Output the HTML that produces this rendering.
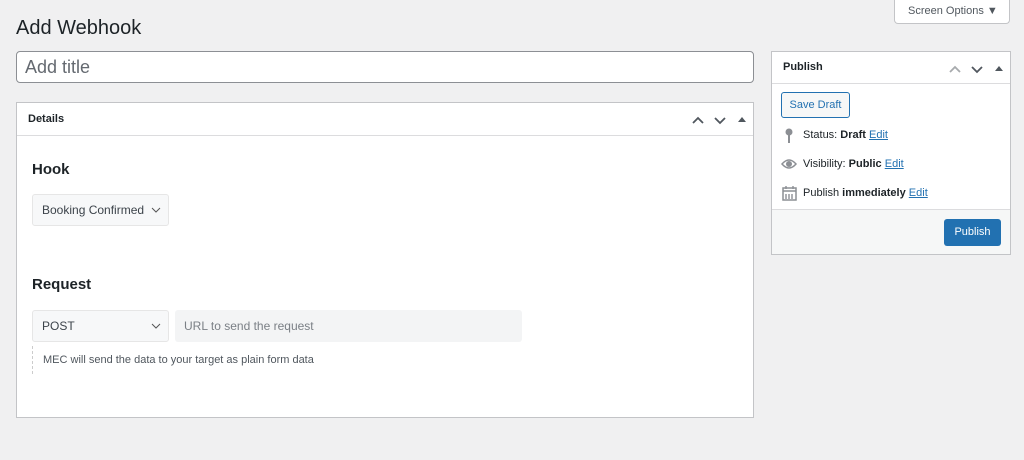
<!DOCTYPE html>
<html><head><style>
*{box-sizing:border-box}
body{margin:0;width:1024px;height:460px;background:#f0f0f1;font-family:"Liberation Sans",sans-serif;color:#1d2327;position:relative;overflow:hidden;font-size:11px}
.abs{position:absolute}
.box{background:#fff;border:1px solid #c3c4c7}
a{color:#2271b1;text-decoration:underline}
.chev{fill:none;stroke:#50575e;stroke-width:1.8}
</style></head><body>
<div class="abs" style="left:894px;top:0;width:116px;height:24px;background:#fff;border:1px solid #c3c4c7;border-top:none;border-radius:0 0 4px 4px;font-size:11px;color:#50575e;line-height:22px;padding-left:13px">Screen Options &#9660;</div>
<div class="abs" style="left:16px;top:16px;font-size:20px;line-height:24px">Add Webhook</div>
<div class="abs" style="left:16px;top:51px;width:738px;height:32px;background:#fff;border:1px solid #8c8f94;border-radius:4px;font-size:18px;color:#646970;line-height:30px;padding-left:8px">Add title</div>

<div class="abs box" style="left:16px;top:102px;width:738px;height:316px">
 <div style="height:33px;border-bottom:1px solid #dcdcde;font-weight:bold;font-size:11px;line-height:32px;padding-left:11px">Details</div>
 <svg class="abs" style="left:674px;top:10px" width="60" height="14"><path class="chev" d="M2 10l5-5 5 5M24 5l5 5 5-5"/><path d="M47 9l4-5 4 5z" fill="#50575e"/></svg>
 <div class="abs" style="left:15px;top:58px;font-size:15px;font-weight:bold">Hook</div>
 <div class="abs" style="left:15px;top:91px;width:137px;height:32px;background:#f7f8f9;border:1px solid #e6e6e6;border-radius:3px;font-size:12px;color:#3c434a;line-height:30px;padding-left:9px">Booking Confirmed<svg class="abs" style="left:118px;top:12px" width="10" height="6"><path d="M1 1l4 4 4-4" fill="none" stroke="#555"/></svg></div>
 <div class="abs" style="left:15px;top:173px;font-size:15px;font-weight:bold">Request</div>
 <div class="abs" style="left:15px;top:207px;width:137px;height:32px;background:#f7f8f9;border:1px solid #e6e6e6;border-radius:3px;font-size:12px;color:#3c434a;line-height:30px;padding-left:9px">POST<svg class="abs" style="left:118px;top:12px" width="10" height="6"><path d="M1 1l4 4 4-4" fill="none" stroke="#555"/></svg></div>
 <div class="abs" style="left:158px;top:207px;width:347px;height:32px;background:#f3f4f5;border-radius:3px;font-size:12px;color:#7a7f85;line-height:32px;padding-left:9px">URL to send the request</div>
 <div class="abs" style="left:15px;top:243px;height:28px;border-left:1px dashed #ccc;font-size:11px;color:#50575e;line-height:28px;padding-left:10px">MEC will send the data to your target as plain form data</div>
</div>

<div class="abs box" style="left:771px;top:51px;width:240px;height:204px">
 <div style="height:32px;border-bottom:1px solid #dcdcde;font-weight:bold;font-size:11px;line-height:31px;padding-left:11px">Publish</div>
 <svg class="abs" style="left:176px;top:10px" width="60" height="14"><path d="M2 10l5-5 5 5" fill="none" stroke="#a7aaad" stroke-width="1.8"/><path class="chev" d="M24 5l5 5 5-5"/><path d="M47 9l4-5 4 5z" fill="#50575e"/></svg>
 <div class="abs" style="left:9px;top:40px;width:69px;height:26px;border:1px solid #2271b1;border-radius:3px;background:#f6f7f7;color:#2271b1;font-size:11px;line-height:24px;text-align:center">Save Draft</div>
 <svg class="abs" style="left:12px;top:76px" width="10" height="16"><circle cx="5" cy="4" r="3.5" fill="#8c8f94"/><rect x="4" y="6" width="2" height="9" fill="#8c8f94"/></svg>
 <div class="abs" style="left:31px;top:77px">Status: <b>Draft</b> <a>Edit</a></div>
 <svg class="abs" style="left:9px;top:106px" width="16" height="12"><path d="M1 6Q8-2 15 6Q8 14 1 6z" fill="none" stroke="#8c8f94" stroke-width="1.5"/><circle cx="8" cy="6" r="3" fill="#8c8f94"/></svg>
 <div class="abs" style="left:31px;top:106px">Visibility: <b>Public</b> <a>Edit</a></div>
 <svg class="abs" style="left:10px;top:134px" width="15" height="15"><rect x="1" y="2" width="13" height="12" fill="none" stroke="#8c8f94" stroke-width="1.5"/><path d="M1 5h13M4 8v5M7 8v5M10 8v5M4 0v3M11 0v3" stroke="#8c8f94" stroke-width="1.4"/></svg>
 <div class="abs" style="left:31px;top:135px">Publish <b>immediately</b> <a>Edit</a></div>
 <div class="abs" style="left:0;top:157px;width:238px;height:45px;background:#f6f7f7;border-top:1px solid #dcdcde"></div>
 <div class="abs" style="left:172px;top:167px;width:57px;height:27px;background:#2271b1;border-radius:3px;color:#fff;font-size:11px;line-height:27px;text-align:center">Publish</div>
</div>
</body></html>
